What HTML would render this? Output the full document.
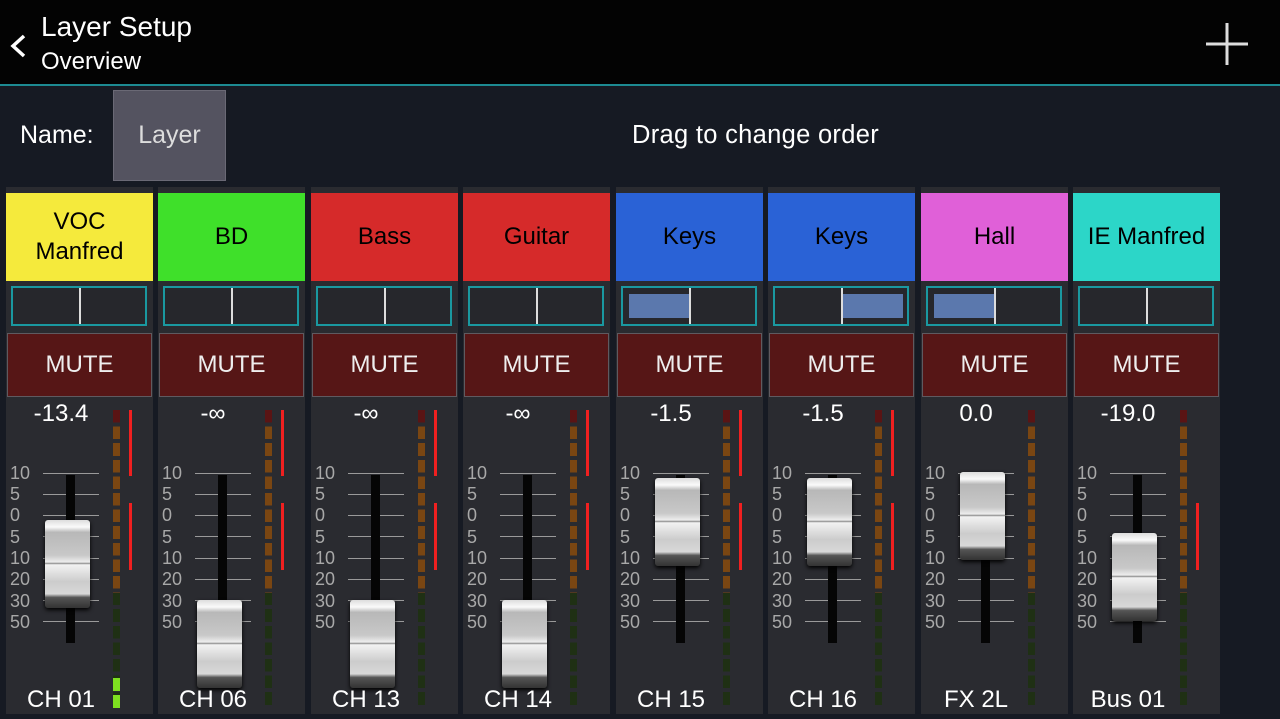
<!DOCTYPE html>
<html><head><meta charset="utf-8"><style>
*{margin:0;padding:0;box-sizing:border-box}
body{width:1280px;height:719px;background:#161a23;font-family:"Liberation Sans","DejaVu Sans",sans-serif;position:relative;overflow:hidden;color:#fff}
.hdr{position:absolute;left:0;top:0;width:1280px;height:86px;background:#030303;border-bottom:2px solid #1d8a92}
.a{position:absolute}
.s{position:absolute;top:187px;width:147px;height:527px;background:#2a2b30}
.lab{position:absolute;left:0;top:6px;width:147px;height:88px;color:#000;font-size:24px;display:flex;align-items:center;justify-content:center;text-align:center;line-height:30px}
.pan{position:absolute;left:5px;top:99px;width:136px;height:40px;border:2px solid #1a98a0;background:#26272c}
.pan i{position:absolute;left:66px;top:0;width:2px;height:36px;background:#ddd}
.pan b{position:absolute;top:6px;height:24px;background:#5b78ad}
.mute{position:absolute;left:1px;top:146px;width:145px;height:64px;background:#561616;border:1px solid #5f5a60;font-size:24px;color:#eee;display:flex;align-items:center;justify-content:center}
.val{position:absolute;left:0;width:110px;top:213px;text-align:center;font-size:24px}
.met{position:absolute;left:107px;top:223px;width:7px;height:298px;background:linear-gradient(#5a1414 0 16.6px,#7a4612 16.6px 183px,#1f3014 183px)}
.met:after{content:"";position:absolute;inset:0;background:repeating-linear-gradient(transparent 0 12.6px,#2a2b30 12.6px 16.6px)}
.g{position:absolute;left:107px;width:7px;height:13px;background:#7ee020}
.pk{position:absolute;left:123px;width:3px;background:#f02020}
.sc{position:absolute;left:4px;font-size:18px;color:#a8a8a8;line-height:18px}
.ln{position:absolute;left:37px;width:56px;height:1px;background:#9a9a9a}
.trk{position:absolute;left:60px;top:288px;width:9px;height:168px;background:#050505}
.cap{position:absolute;left:39px;width:45px;height:88px;border-radius:3px;background:linear-gradient(#ddd 0,#fafafa 8%,#b8b8b8 14%,#c8c8c8 40%,#eee 48%,#888 49%,#f2f2f2 51%,#ccc 70%,#d8d8d8 84%,#555 88%,#333 100%);box-shadow:0 2px 4px #000}
.nm{position:absolute;left:0;width:110px;top:499px;text-align:center;font-size:24px}
</style></head><body>
<div class="hdr"></div>
<svg class="a" style="left:8px;top:33px" width="20" height="26"><path d="M16 3 L5 13 L16 23" stroke="#fff" stroke-width="3.5" fill="none"/></svg>
<div class="a" style="left:41px;top:11px;font-size:28px">Layer Setup</div>
<div class="a" style="left:41px;top:48px;font-size:24px">Overview</div>
<svg class="a" style="left:1204px;top:21px" width="46" height="46"><path d="M23 2V44M2 23H44" stroke="#ddd" stroke-width="3"/></svg>
<div class="a" style="left:20px;top:121px;font-size:25px">Name:</div>
<div class="a" style="left:113px;top:90px;width:113px;height:91px;background:#545360;border:1px solid #6a6975;font-size:25px;color:#ddd;display:flex;align-items:center;justify-content:center">Layer</div>
<div class="a" style="left:632px;top:121px;font-size:25.5px;letter-spacing:0.3px">Drag to change order</div>

<div class="s" style="left:6px"><div class="lab" style="background:#f5ea3c">VOC<br>Manfred</div><div class="pan"><i></i></div><div class="mute">MUTE</div><div class="val">-13.4</div><div class="met"></div><div class="g" style="top:491px"></div><div class="g" style="top:508px"></div><div class="pk" style="top:223px;height:66px"></div><div class="pk" style="top:316px;height:67px"></div>
<div class="sc" style="top:277px">10</div><div class="sc" style="top:298px">5</div><div class="sc" style="top:319px">0</div><div class="sc" style="top:341px">5</div><div class="sc" style="top:362px">10</div><div class="sc" style="top:383px">20</div><div class="sc" style="top:405px">30</div><div class="sc" style="top:426px">50</div>
<div class="ln" style="top:286px"></div><div class="ln" style="top:307px"></div><div class="ln" style="top:328px"></div><div class="ln" style="top:349px"></div><div class="ln" style="top:371px"></div><div class="ln" style="top:392px"></div><div class="ln" style="top:413px"></div><div class="ln" style="top:434px"></div>
<div class="trk"></div><div class="cap" style="top:333px"></div><div class="nm">CH 01</div></div>

<div class="s" style="left:158px"><div class="lab" style="background:#3fe02a">BD</div><div class="pan"><i></i></div><div class="mute">MUTE</div><div class="val">-∞</div><div class="met"></div><div class="pk" style="top:223px;height:66px"></div><div class="pk" style="top:316px;height:67px"></div>
<div class="sc" style="top:277px">10</div><div class="sc" style="top:298px">5</div><div class="sc" style="top:319px">0</div><div class="sc" style="top:341px">5</div><div class="sc" style="top:362px">10</div><div class="sc" style="top:383px">20</div><div class="sc" style="top:405px">30</div><div class="sc" style="top:426px">50</div>
<div class="ln" style="top:286px"></div><div class="ln" style="top:307px"></div><div class="ln" style="top:328px"></div><div class="ln" style="top:349px"></div><div class="ln" style="top:371px"></div><div class="ln" style="top:392px"></div><div class="ln" style="top:413px"></div><div class="ln" style="top:434px"></div>
<div class="trk"></div><div class="cap" style="top:413px"></div><div class="nm">CH 06</div></div>

<div class="s" style="left:311px"><div class="lab" style="background:#d62a2a">Bass</div><div class="pan"><i></i></div><div class="mute">MUTE</div><div class="val">-∞</div><div class="met"></div><div class="pk" style="top:223px;height:66px"></div><div class="pk" style="top:316px;height:67px"></div>
<div class="sc" style="top:277px">10</div><div class="sc" style="top:298px">5</div><div class="sc" style="top:319px">0</div><div class="sc" style="top:341px">5</div><div class="sc" style="top:362px">10</div><div class="sc" style="top:383px">20</div><div class="sc" style="top:405px">30</div><div class="sc" style="top:426px">50</div>
<div class="ln" style="top:286px"></div><div class="ln" style="top:307px"></div><div class="ln" style="top:328px"></div><div class="ln" style="top:349px"></div><div class="ln" style="top:371px"></div><div class="ln" style="top:392px"></div><div class="ln" style="top:413px"></div><div class="ln" style="top:434px"></div>
<div class="trk"></div><div class="cap" style="top:413px"></div><div class="nm">CH 13</div></div>

<div class="s" style="left:463px"><div class="lab" style="background:#d62a2a">Guitar</div><div class="pan"><i></i></div><div class="mute">MUTE</div><div class="val">-∞</div><div class="met"></div><div class="pk" style="top:223px;height:66px"></div><div class="pk" style="top:316px;height:67px"></div>
<div class="sc" style="top:277px">10</div><div class="sc" style="top:298px">5</div><div class="sc" style="top:319px">0</div><div class="sc" style="top:341px">5</div><div class="sc" style="top:362px">10</div><div class="sc" style="top:383px">20</div><div class="sc" style="top:405px">30</div><div class="sc" style="top:426px">50</div>
<div class="ln" style="top:286px"></div><div class="ln" style="top:307px"></div><div class="ln" style="top:328px"></div><div class="ln" style="top:349px"></div><div class="ln" style="top:371px"></div><div class="ln" style="top:392px"></div><div class="ln" style="top:413px"></div><div class="ln" style="top:434px"></div>
<div class="trk"></div><div class="cap" style="top:413px"></div><div class="nm">CH 14</div></div>

<div class="s" style="left:616px"><div class="lab" style="background:#2a62d6">Keys</div><div class="pan"><b style="left:6px;width:60px"></b><i></i></div><div class="mute">MUTE</div><div class="val">-1.5</div><div class="met"></div><div class="pk" style="top:223px;height:66px"></div><div class="pk" style="top:316px;height:67px"></div>
<div class="sc" style="top:277px">10</div><div class="sc" style="top:298px">5</div><div class="sc" style="top:319px">0</div><div class="sc" style="top:341px">5</div><div class="sc" style="top:362px">10</div><div class="sc" style="top:383px">20</div><div class="sc" style="top:405px">30</div><div class="sc" style="top:426px">50</div>
<div class="ln" style="top:286px"></div><div class="ln" style="top:307px"></div><div class="ln" style="top:328px"></div><div class="ln" style="top:349px"></div><div class="ln" style="top:371px"></div><div class="ln" style="top:392px"></div><div class="ln" style="top:413px"></div><div class="ln" style="top:434px"></div>
<div class="trk"></div><div class="cap" style="top:291px"></div><div class="nm">CH 15</div></div>

<div class="s" style="left:768px"><div class="lab" style="background:#2a62d6">Keys</div><div class="pan"><i></i><b style="left:68px;width:60px"></b></div><div class="mute">MUTE</div><div class="val">-1.5</div><div class="met"></div><div class="pk" style="top:223px;height:66px"></div><div class="pk" style="top:316px;height:67px"></div>
<div class="sc" style="top:277px">10</div><div class="sc" style="top:298px">5</div><div class="sc" style="top:319px">0</div><div class="sc" style="top:341px">5</div><div class="sc" style="top:362px">10</div><div class="sc" style="top:383px">20</div><div class="sc" style="top:405px">30</div><div class="sc" style="top:426px">50</div>
<div class="ln" style="top:286px"></div><div class="ln" style="top:307px"></div><div class="ln" style="top:328px"></div><div class="ln" style="top:349px"></div><div class="ln" style="top:371px"></div><div class="ln" style="top:392px"></div><div class="ln" style="top:413px"></div><div class="ln" style="top:434px"></div>
<div class="trk"></div><div class="cap" style="top:291px"></div><div class="nm">CH 16</div></div>

<div class="s" style="left:921px"><div class="lab" style="background:#e060d8">Hall</div><div class="pan"><b style="left:6px;width:60px"></b><i></i></div><div class="mute">MUTE</div><div class="val">0.0</div><div class="met"></div>
<div class="sc" style="top:277px">10</div><div class="sc" style="top:298px">5</div><div class="sc" style="top:319px">0</div><div class="sc" style="top:341px">5</div><div class="sc" style="top:362px">10</div><div class="sc" style="top:383px">20</div><div class="sc" style="top:405px">30</div><div class="sc" style="top:426px">50</div>
<div class="ln" style="top:286px"></div><div class="ln" style="top:307px"></div><div class="ln" style="top:328px"></div><div class="ln" style="top:349px"></div><div class="ln" style="top:371px"></div><div class="ln" style="top:392px"></div><div class="ln" style="top:413px"></div><div class="ln" style="top:434px"></div>
<div class="trk"></div><div class="cap" style="top:285px"></div><div class="nm">FX 2L</div></div>

<div class="s" style="left:1073px"><div class="lab" style="background:#2cd6c8">IE Manfred</div><div class="pan"><i></i></div><div class="mute">MUTE</div><div class="val">-19.0</div><div class="met"></div><div class="pk" style="top:316px;height:67px"></div>
<div class="sc" style="top:277px">10</div><div class="sc" style="top:298px">5</div><div class="sc" style="top:319px">0</div><div class="sc" style="top:341px">5</div><div class="sc" style="top:362px">10</div><div class="sc" style="top:383px">20</div><div class="sc" style="top:405px">30</div><div class="sc" style="top:426px">50</div>
<div class="ln" style="top:286px"></div><div class="ln" style="top:307px"></div><div class="ln" style="top:328px"></div><div class="ln" style="top:349px"></div><div class="ln" style="top:371px"></div><div class="ln" style="top:392px"></div><div class="ln" style="top:413px"></div><div class="ln" style="top:434px"></div>
<div class="trk"></div><div class="cap" style="top:346px"></div><div class="nm">Bus 01</div></div>
</body></html>
